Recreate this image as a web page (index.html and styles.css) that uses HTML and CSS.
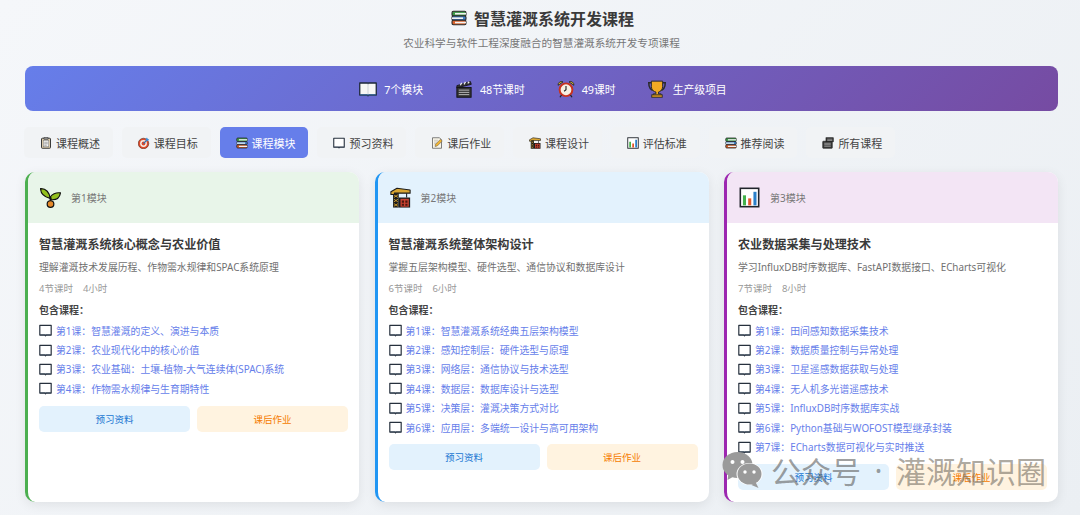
FILE: index.html
```html
<!DOCTYPE html>
<html lang="zh-CN">
<head>
  <meta charset="UTF-8" />
  <meta name="viewport" content="width=device-width, initial-scale=1.0"/>
  <title>智慧灌溉系统开发课程</title>
  <link rel="stylesheet" href="styles.css">
</head>
<body>

  <svg class="sprite" xmlns="http://www.w3.org/2000/svg">
    <symbol id="i-books" viewBox="0 0 24 24">
      <rect x="1.500" y="2" width="21" height="7" rx="2" fill="#3f9b4a" stroke="#2a2a2a" stroke-width="1.600"/>
      <rect x="6" y="4.400" width="16.500" height="2.400" fill="#f2f2f2"/>
      <rect x="1.500" y="9" width="21" height="6.500" rx="2" fill="#3f7fc4" stroke="#2a2a2a" stroke-width="1.600"/>
      <rect x="1.500" y="11.100" width="16.500" height="2.400" fill="#f2f2f2"/>
      <rect x="1.500" y="15.500" width="21" height="6.500" rx="2" fill="#d9622b" stroke="#2a2a2a" stroke-width="1.600"/>
      <rect x="6" y="17.600" width="16.500" height="2.400" fill="#f2f2f2"/>
    </symbol>
    <symbol id="i-open" viewBox="0 0 24 24">
      <path d="M1 4h10c.6 0 1 .3 1 .8.1-.5.4-.8 1-.8h10v16H13l-1 1-1-1H1z" fill="#f7f7f5" stroke="#1c2738" stroke-width="1.700" stroke-linejoin="round"/>
      <path d="M12 5v15" stroke="#c9ced6" stroke-width="1.200"/>
      <path d="M1.500 19.800h21" stroke="#3a6ea5" stroke-width="1.400"/>
    </symbol>
    <symbol id="i-clapper" viewBox="0 0 24 24">
      <rect x="2.500" y="10" width="19" height="13" fill="#333" stroke="#111" stroke-width="1.200"/>
      <path d="M5 13.500h14M5 16.500h14M5 19.500h14" stroke="#c4c4c4" stroke-width="1.200"/>
      <path d="M2.500 7.500l18-5.500 1.200 3.800-19.200 4.600z" fill="#333" stroke="#111" stroke-width="1.100"/>
      <path d="M7 7l2-3.200M12 5.800l2-3.200M17 4.500l2-2.200" stroke="#eee" stroke-width="1.700"/>
    </symbol>
    <symbol id="i-alarm" viewBox="0 0 24 24">
      <circle cx="12" cy="13" r="8.500" fill="#f6efe2" stroke="#c8321f" stroke-width="2.600"/>
      <path d="M12 8v5l-2.500 2" fill="none" stroke="#222" stroke-width="1.500"/>
      <path d="M1.500 7a4.500 4.500 0 0 1 6.500-4.500zM22.500 7a4.500 4.500 0 0 0-6.500-4.500z" fill="#e8c33c" stroke="#222" stroke-width="1.200"/>
      <path d="M6 20l-2 3M18 20l2 3" stroke="#222" stroke-width="1.800"/>
    </symbol>
    <symbol id="i-trophy" viewBox="0 0 24 24">
      <path d="M5 3.500H1c0 6 2 9.500 7 10.500M19 3.500h4c0 6-2 9.500-7 10.500" fill="none" stroke="#2a2a2a" stroke-width="2"/>
      <path d="M4.500 1.500h15V9c0 4.500-3.500 6.500-5.500 7v2.500h3.500v2H7v-2h3.500V16C8 15.500 4.500 13.500 4.500 9z" fill="#f2a924" stroke="#2a2a2a" stroke-width="1.300" stroke-linejoin="round"/>
      <rect x="5" y="19.800" width="14" height="3.200" fill="#e09a1e" stroke="#2a2a2a" stroke-width="1.200"/>
    </symbol>
    <symbol id="i-clip" viewBox="0 0 24 24">
      <rect x="3" y="2.500" width="18" height="20" rx="1.500" fill="#d9c9aa" stroke="#3a3a3a" stroke-width="2"/>
      <rect x="6.500" y="6.500" width="11" height="13" fill="#f4f4f4" stroke="#777" stroke-width="1"/>
      <rect x="8" y="1" width="8" height="4" fill="#888" stroke="#3a3a3a" stroke-width="1"/>
      <path d="M8.500 10.500h7M8.500 13.500h7M8.500 16.500h5" stroke="#777" stroke-width="1.200"/>
    </symbol>
    <symbol id="i-target" viewBox="0 0 24 24">
      <circle cx="11" cy="13" r="10.500" fill="#dd4a2b" stroke="#5a2a1a" stroke-width="1.200"/>
      <circle cx="11" cy="13" r="6.800" fill="#f5efe6"/>
      <circle cx="11" cy="13" r="3.800" fill="#dd4a2b"/>
      <path d="M11 13l9-9" stroke="#2f6fb0" stroke-width="2.200"/>
      <path d="M18 1l1.200 3 3.300 1-3 3-3.200-1-1.100-3.200z" fill="#3f8fd6"/>
    </symbol>
    <symbol id="i-tablet" viewBox="0 0 24 24">
      <path d="M1.500 2.500h21v18H13.500l-1.500 1.300-1.500-1.300H1.500z" fill="#fff" stroke="#26303d" stroke-width="2.200" stroke-linejoin="round"/>
      <path d="M2 20h20" stroke="#3c4a5c" stroke-width="1.800"/>
    </symbol>
    <symbol id="i-memo" viewBox="0 0 24 24">
      <path d="M3 1.500h14l4 4v17H3z" fill="#f9f5e8" stroke="#555" stroke-width="1.500"/>
      <path d="M6 6.500h8M6 10h7M6 13.500h5" stroke="#a9a9a9" stroke-width="1.200"/>
      <path d="M8 19l1-4.500 10-10 3.500 3.500-10 10z" fill="#f0b332" stroke="#555" stroke-width="1"/>
    </symbol>
    <symbol id="i-crane" viewBox="0 0 24 24">
      <rect x="3.500" y="6" width="6.500" height="17.500" fill="#1c1c1c"/>
      <path d="M4.500 9l4.500 3M9 9l-4.500 3M4.500 14l4.500 3M9 14l-4.500 3M4.500 19l4.500 3M9 19l-4.500 3" stroke="#d9a531" stroke-width="1"/>
      <path d="M1 5.500L8 1.500l15 2v3.500H5v1.500H1z" fill="#d9a531" stroke="#1c1c1c" stroke-width="1.200" stroke-linejoin="round"/>
      <path d="M19 7v5" stroke="#1c1c1c" stroke-width="1.200"/>
      <rect x="10" y="12" width="13" height="11.500" fill="#1c1c1c"/>
      <rect x="12" y="13.500" width="9.500" height="9" fill="#c9412f"/>
      <path d="M13.500 15.500H16V18h-2.500zM17.500 15.500H20V18h-2.500zM13.500 19H16v2.500h-2.500zM17.500 19H20v2.500h-2.500z" fill="#4a1710"/>
    </symbol>
    <symbol id="i-chart" viewBox="0 0 24 24">
      <rect x="1.500" y="1.500" width="21" height="21" fill="#fff" stroke="#20242b" stroke-width="1.800"/>
      <rect x="4.500" y="9.500" width="3.500" height="11.500" fill="#43b14b"/>
      <rect x="10.500" y="13" width="3.500" height="8" fill="#e2572b"/>
      <rect x="16.500" y="5.500" width="3.500" height="15.500" fill="#2a7fc9"/>
    </symbol>
    <symbol id="i-film" viewBox="0 0 24 24">
      <rect x="1.500" y="8.500" width="19" height="14" rx="1" fill="#3a3a3a" stroke="#1a1a1a" stroke-width="1.300"/>
      <path d="M4.500 12.500h13M4.500 15.500h13M4.500 18.500h13" stroke="#ccc" stroke-width="1.200"/>
      <rect x="8" y="1.500" width="14.500" height="8" fill="#3a3a3a" stroke="#1a1a1a" stroke-width="1.300"/>
      <path d="M10.500 4.500h10M10.500 7h10" stroke="#ccc" stroke-width="1"/>
    </symbol>
    <symbol id="i-seed" viewBox="0 0 24 24">
      <path d="M11.500 13C11 6.500 7 1.500 .6 1.800 .8 7.500 5 11.500 11.500 13z" fill="#93c01f" stroke="#111" stroke-width="1.300" stroke-linejoin="round"/>
      <path d="M12 11c2.500-3 6-5 11.400-4.300C22.500 12.500 18 15 12.500 14.500z" fill="#93c01f" stroke="#111" stroke-width="1.300" stroke-linejoin="round"/>
      <path d="M12 12v6" stroke="#111" stroke-width="2"/>
      <circle cx="12" cy="19.500" r="3.800" fill="#e6892a" stroke="#111" stroke-width="1.400"/>
    </symbol>
    <symbol id="i-wechat" viewBox="0 0 40 36">
      <ellipse cx="15" cy="13" rx="15" ry="13" fill="currentColor"/>
      <path d="M6 21l-1 7 7-4z" fill="currentColor"/>
      <ellipse cx="27" cy="22" rx="13" ry="11" fill="#fff"/>
      <ellipse cx="27" cy="22" rx="12" ry="10.500" fill="currentColor"/>
      <path d="M33 30l3 6-7-3z" fill="currentColor"/>
      <circle cx="10" cy="10" r="2" fill="#fff"/>
      <circle cx="20" cy="10" r="2" fill="#fff"/>
      <circle cx="22.500" cy="20" r="1.700" fill="#fff"/>
      <circle cx="31.500" cy="20" r="1.700" fill="#fff"/>
    </symbol>
  </svg>

  <header class="page-head">
    <h1><svg class="title-icon"><use href="#i-books"/></svg>智慧灌溉系统开发课程</h1>
    <p class="subtitle">农业科学与软件工程深度融合的智慧灌溉系统开发专项课程</p>
  </header>

  <div class="banner">
    <div class="stat"><svg class="stat-icon"><use href="#i-open"/></svg>7个模块</div>
    <div class="stat"><svg class="stat-icon"><use href="#i-clapper"/></svg>48节课时</div>
    <div class="stat"><svg class="stat-icon"><use href="#i-alarm"/></svg>49课时</div>
    <div class="stat"><svg class="stat-icon"><use href="#i-trophy"/></svg>生产级项目</div>
  </div>

  <nav class="tabs">
    <a class="tab"><svg class="tab-icon"><use href="#i-clip"/></svg>课程概述</a>
    <a class="tab"><svg class="tab-icon"><use href="#i-target"/></svg>课程目标</a>
    <a class="tab active"><svg class="tab-icon"><use href="#i-books"/></svg>课程模块</a>
    <a class="tab"><svg class="tab-icon"><use href="#i-tablet"/></svg>预习资料</a>
    <a class="tab"><svg class="tab-icon"><use href="#i-memo"/></svg>课后作业</a>
    <a class="tab"><svg class="tab-icon"><use href="#i-crane"/></svg>课程设计</a>
    <a class="tab"><svg class="tab-icon"><use href="#i-chart"/></svg>评估标准</a>
    <a class="tab"><svg class="tab-icon"><use href="#i-books"/></svg>推荐阅读</a>
    <a class="tab"><svg class="tab-icon"><use href="#i-film"/></svg>所有课程</a>
  </nav>

  <main class="cards">

    <section class="card card-green">
      <div class="card-head">
        <svg class="module-icon"><use href="#i-seed"/></svg>
        <span class="module-no">第1模块</span>
      </div>
      <div class="card-body">
        <h2>智慧灌溉系统核心概念与农业价值</h2>
        <p class="desc">理解灌溉技术发展历程、作物需水规律和SPAC系统原理</p>
        <p class="meta"><span>4节课时</span><span>4小时</span></p>
        <h3>包含课程：</h3>
        <ul class="lessons">
          <li><svg class="lesson-icon"><use href="#i-tablet"/></svg>第1课：智慧灌溉的定义、演进与本质</li>
          <li><svg class="lesson-icon"><use href="#i-tablet"/></svg>第2课：农业现代化中的核心价值</li>
          <li><svg class="lesson-icon"><use href="#i-tablet"/></svg>第3课：农业基础：土壤-植物-大气连续体(SPAC)系统</li>
          <li><svg class="lesson-icon"><use href="#i-tablet"/></svg>第4课：作物需水规律与生育期特性</li>
        </ul>
        <div class="actions">
          <a class="btn btn-blue">预习资料</a>
          <a class="btn btn-orange">课后作业</a>
        </div>
      </div>
    </section>

    <section class="card card-blue">
      <div class="card-head">
        <svg class="module-icon"><use href="#i-crane"/></svg>
        <span class="module-no">第2模块</span>
      </div>
      <div class="card-body">
        <h2>智慧灌溉系统整体架构设计</h2>
        <p class="desc">掌握五层架构模型、硬件选型、通信协议和数据库设计</p>
        <p class="meta"><span>6节课时</span><span>6小时</span></p>
        <h3>包含课程：</h3>
        <ul class="lessons">
          <li><svg class="lesson-icon"><use href="#i-tablet"/></svg>第1课：智慧灌溉系统经典五层架构模型</li>
          <li><svg class="lesson-icon"><use href="#i-tablet"/></svg>第2课：感知控制层：硬件选型与原理</li>
          <li><svg class="lesson-icon"><use href="#i-tablet"/></svg>第3课：网络层：通信协议与技术选型</li>
          <li><svg class="lesson-icon"><use href="#i-tablet"/></svg>第4课：数据层：数据库设计与选型</li>
          <li><svg class="lesson-icon"><use href="#i-tablet"/></svg>第5课：决策层：灌溉决策方式对比</li>
          <li><svg class="lesson-icon"><use href="#i-tablet"/></svg>第6课：应用层：多端统一设计与高可用架构</li>
        </ul>
        <div class="actions">
          <a class="btn btn-blue">预习资料</a>
          <a class="btn btn-orange">课后作业</a>
        </div>
      </div>
    </section>

    <section class="card card-purple">
      <div class="card-head">
        <svg class="module-icon"><use href="#i-chart"/></svg>
        <span class="module-no">第3模块</span>
      </div>
      <div class="card-body">
        <h2>农业数据采集与处理技术</h2>
        <p class="desc">学习InfluxDB时序数据库、FastAPI数据接口、ECharts可视化</p>
        <p class="meta"><span>7节课时</span><span>8小时</span></p>
        <h3>包含课程：</h3>
        <ul class="lessons">
          <li><svg class="lesson-icon"><use href="#i-tablet"/></svg>第1课：田间感知数据采集技术</li>
          <li><svg class="lesson-icon"><use href="#i-tablet"/></svg>第2课：数据质量控制与异常处理</li>
          <li><svg class="lesson-icon"><use href="#i-tablet"/></svg>第3课：卫星遥感数据获取与处理</li>
          <li><svg class="lesson-icon"><use href="#i-tablet"/></svg>第4课：无人机多光谱遥感技术</li>
          <li><svg class="lesson-icon"><use href="#i-tablet"/></svg>第5课：InfluxDB时序数据库实战</li>
          <li><svg class="lesson-icon"><use href="#i-tablet"/></svg>第6课：Python基础与WOFOST模型继承封装</li>
          <li><svg class="lesson-icon"><use href="#i-tablet"/></svg>第7课：ECharts数据可视化与实时推送</li>
        </ul>
        <div class="actions">
          <a class="btn btn-blue">预习资料</a>
          <a class="btn btn-orange">课后作业</a>
        </div>
      </div>
    </section>

  </main>

  <div class="watermark">
    <svg class="wechat"><use href="#i-wechat"/></svg>
    <span class="wm-a">公众号</span>
    <span class="wm-dot">·</span>
    <span class="wm-b">灌溉知识圈</span>
  </div>

</body>
</html>
```

FILE: styles.css
```css
* {
  box-sizing: border-box;
}
html, body {
  height: 515px;
  overflow: hidden;
}
body {
  position: relative;
  margin: 0;
  padding: 0 22px 0 25px;
  font-family: "Noto Sans", "Noto Sans CJK SC", sans-serif;
  background: linear-gradient(135deg, #f5f7fa, #ebeff3);
  color: #333;
}
.sprite {
  display: none;
}

/* header */
.page-head {
  height: 66px;
  padding-top: 6px;
  text-align: center;
}
h1 {
  display: flex;
  justify-content: center;
  align-items: center;
  gap: 7px;
  margin: 0;
  padding-left: 2px;
  height: 24px;
  font-size: 16px;
  font-weight: 700;
  color: #3a3a3a;
}
.title-icon {
  width: 16px;
  height: 16px;
}
.subtitle {
  margin: 5px 0 0;
  font-size: 10.65px;
  line-height: 16px;
  color: #777;
}

/* stat banner */
.banner {
  display: flex;
  justify-content: center;
  align-items: center;
  gap: 32px;
  height: 45px;
  padding-left: 3px;
  border-radius: 8px;
  background: linear-gradient(135deg, #667eea, #764ba2);
  color: #fff;
  font-size: 10.8px;
}
.stat {
  display: flex;
  align-items: center;
  gap: 7px;
}
.stat-icon {
  width: 18px;
  height: 18px;
}

/* tabs */
.tabs {
  display: flex;
  gap: 9px;
  margin: 16px 0 0 -1px;
}
.tab {
  display: flex;
  align-items: center;
  gap: 4px;
  height: 31px;
  width: 88.8px;
  padding-left: 16px;
  border-radius: 5px;
  background: #f1f3f5;
  font-size: 11px;
  color: #444;
}
.tab.active {
  background: #667eea;
  color: #fff;
}
.tab-icon {
  width: 12px;
  height: 12px;
  flex: none;
}

/* module cards */
.cards {
  display: grid;
  grid-template-columns: repeat(3, 1fr);
  gap: 15.5px;
  margin-top: 14px;
  height: 330px;
}
.card {
  overflow: hidden;
  border-left: 3px solid;
  border-radius: 10px;
  background: #fff;
  box-shadow: 0 3px 12px rgba(0, 0, 0, 0.08);
}
.card-green { border-color: #4caf50; }
.card-blue { border-color: #2196f3; }
.card-purple { border-color: #9c27b0; }
.card-green .card-head { background: #e8f5e9; }
.card-blue .card-head { background: #e3f2fd; }
.card-purple .card-head { background: #f3e5f5; }
.card-head {
  display: flex;
  align-items: center;
  gap: 10px;
  height: 51px;
  padding-left: 12px;
}
.module-icon {
  width: 21px;
  height: 21px;
}
.module-no {
  font-size: 10px;
  color: #777;
}
.card-body {
  padding: 13px 11px 0;
}
h2 {
  margin: 0;
  font-size: 12.1px;
  line-height: 18px;
  font-weight: 700;
  color: #3a3a3a;
}
.desc {
  margin: 6px 0 0;
  font-size: 9.85px;
  line-height: 14px;
  color: #707070;
}
.meta {
  display: flex;
  gap: 10px;
  margin: 8px 0 0;
  font-size: 9.5px;
  line-height: 14px;
  color: #999;
}
h3 {
  margin: 7px 0 0;
  font-size: 10px;
  line-height: 14px;
  font-weight: 700;
  color: #444;
}
.lessons {
  margin: 4px 0 0;
  padding: 0;
  list-style: none;
}
.lessons li {
  display: flex;
  align-items: center;
  gap: 4px;
  height: 19.4px;
  font-size: 9.85px;
  color: #667eea;
}
.lesson-icon {
  width: 13px;
  height: 13px;
  flex: none;
}
.actions {
  display: grid;
  grid-template-columns: 1fr 1fr;
  gap: 7px;
  margin-top: 7px;
}
.btn {
  display: flex;
  justify-content: center;
  align-items: center;
  height: 26px;
  border-radius: 5px;
  font-size: 9.5px;
}
.btn-blue {
  background: #e3f2fd;
  color: #1976d2;
}
.btn-orange {
  background: #fff3e0;
  color: #f57c00;
}

/* watermark over the third card */
.watermark {
  position: absolute;
  left: 722px;
  top: 452px;
  display: flex;
  align-items: center;
  height: 36px;
  font-size: 30px;
  font-weight: 400;
  color: rgba(96, 96, 96, 0.62);
  white-space: nowrap;
}
.wechat {
  width: 41px;
  height: 36px;
  margin-right: 8px;
  color: #9a9a9a;
}
.wm-dot {
  width: 35px;
  text-align: center;
}
.wm-b {
  color: rgba(120, 112, 100, 0.62);
}
```
